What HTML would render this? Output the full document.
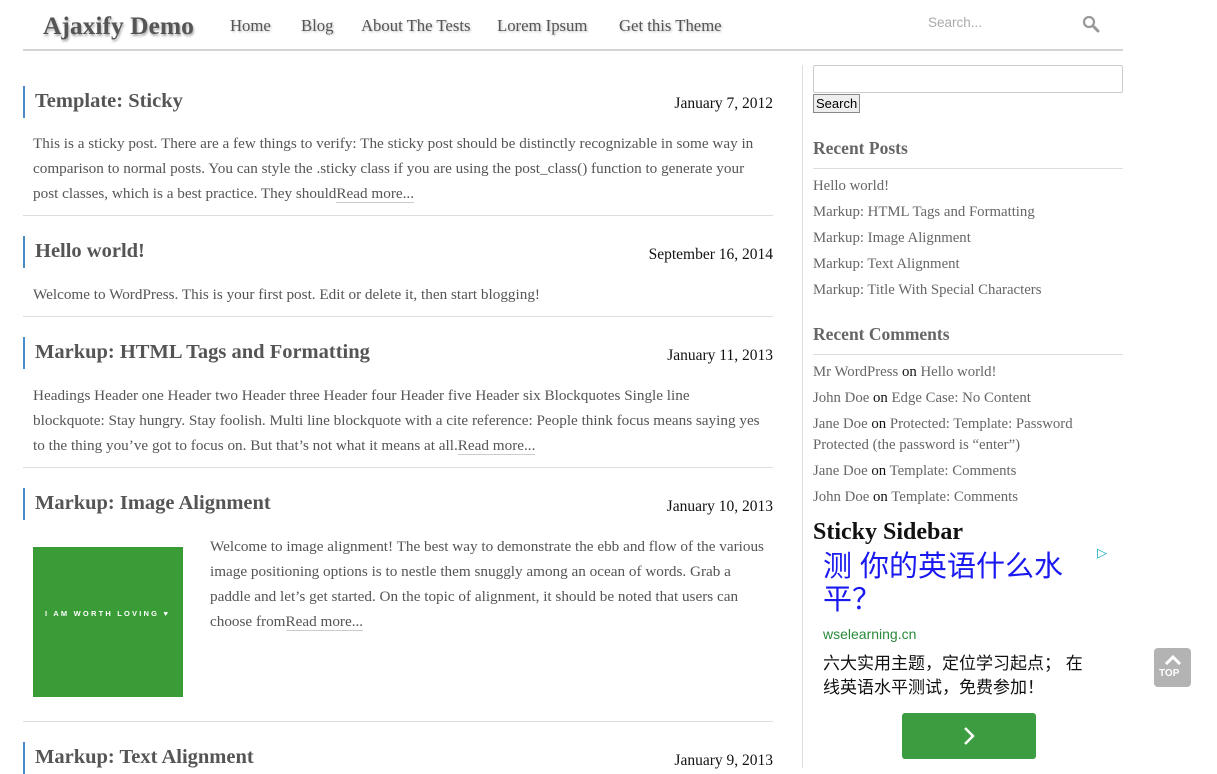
<!DOCTYPE html>
<html><head><meta charset="utf-8"><style>
*{margin:0;padding:0;box-sizing:border-box}
body{width:1217px;height:768px;overflow:hidden;background:#fff;font-family:"Liberation Serif",serif;color:#555;position:relative}
.a{position:absolute;white-space:nowrap}
.logo{left:43px;top:11px;font-size:25.5px;font-weight:bold;color:#555;text-shadow:1px 2px 2px #aaa}
.nav{top:16px;font-size:16.7px;color:#555;text-shadow:1px 1px 2px #bbb}
.hl{position:absolute;left:23px;top:49px;width:1100px;height:2px;background:#d4d4d4}
.t{position:absolute;left:23px;border-left:2px solid #4a8ac8;padding-left:10px;height:32px;line-height:30px;font-size:20.5px;font-weight:bold;color:#555;white-space:nowrap}
.d{position:absolute;right:444px;font-size:15.5px;color:#111;white-space:nowrap}
.p{position:absolute;left:33px;font-size:15.2px;line-height:25px;color:#555;white-space:nowrap}
.rm{border-bottom:1px solid #ccc}
.sep{position:absolute;left:23px;width:750px;height:1px;background:#ddd}
.sb{position:absolute;left:813px;white-space:nowrap}
.wt{font-size:17.5px;font-weight:bold;color:#666}
.sl{font-size:14.8px;line-height:26px;color:#666}
.sl b{font-weight:normal;color:#111}
</style></head><body>
<div class="a logo">Ajaxify Demo</div>
<div class="a nav" style="left:230px">Home</div>
<div class="a nav" style="left:301px">Blog</div>
<div class="a nav" style="left:361px">About The Tests</div>
<div class="a nav" style="left:497px">Lorem Ipsum</div>
<div class="a nav" style="left:619px">Get this Theme</div>
<div class="a" style="left:928px;top:15px;font-family:'Liberation Sans',sans-serif;font-size:13.5px;color:#aaa">Search...</div>
<svg class="a" style="left:1082px;top:15px" width="18" height="18" viewBox="0 0 18 18"><circle cx="7" cy="7" r="5" fill="none" stroke="#999" stroke-width="2.2"/><path d="M11 11 L16 16" stroke="#999" stroke-width="3" stroke-linecap="round"/></svg>
<div class="hl"></div>
<div style="position:absolute;left:802px;top:65px;width:1px;height:703px;background:#ddd"></div>

<div class="t" style="top:86px">Template: Sticky</div>
<div class="d" style="top:95px">January 7, 2012</div>
<div class="p" style="top:131px">This is a sticky post. There are a few things to verify: The sticky post should be distinctly recognizable in some way in<br>comparison to normal posts. You can style the .sticky class if you are using the post_class() function to generate your<br>post classes, which is a best practice. They should<span class="rm">Read more...</span></div>
<div class="sep" style="top:215px"></div>

<div class="t" style="top:236px">Hello world!</div>
<div class="d" style="top:246px">September 16, 2014</div>
<div class="p" style="top:282px">Welcome to WordPress. This is your first post. Edit or delete it, then start blogging!</div>
<div class="sep" style="top:316px"></div>

<div class="t" style="top:337px">Markup: HTML Tags and Formatting</div>
<div class="d" style="top:347px">January 11, 2013</div>
<div class="p" style="top:383px">Headings Header one Header two Header three Header four Header five Header six Blockquotes Single line<br>blockquote: Stay hungry. Stay foolish. Multi line blockquote with a cite reference: People think focus means saying yes<br>to the thing you’ve got to focus on. But that’s not what it means at all.<span class="rm">Read more...</span></div>
<div class="sep" style="top:467px"></div>

<div class="t" style="top:488px">Markup: Image Alignment</div>
<div class="d" style="top:498px">January 10, 2013</div>
<div style="position:absolute;left:33px;top:547px;width:150px;height:150px;background:#3a9c36">
<div class="a" style="left:12px;top:62px;color:#fff;font-family:'Liberation Sans',sans-serif;font-size:7.5px;letter-spacing:2.2px;font-weight:bold">I AM WORTH LOVING ♥</div></div>
<div class="p" style="left:210px;top:534px">Welcome to image alignment! The best way to demonstrate the ebb and flow of the various<br>image positioning options is to nestle them snuggly among an ocean of words. Grab a<br>paddle and let’s get started. On the topic of alignment, it should be noted that users can<br>choose from<span class="rm">Read more...</span></div>
<div class="sep" style="top:721px"></div>

<div class="t" style="top:742px">Markup: Text Alignment</div>
<div class="d" style="top:752px">January 9, 2013</div>

<div class="sb" style="top:65px;width:310px;height:28px;border:1px solid #ccc;border-radius:2px"></div>
<div class="sb" style="top:94px;height:19px;padding:0 2px;border:1px solid #888;background:#eee;font-family:'Liberation Sans',sans-serif;font-size:13px;line-height:17px;color:#000">Search</div>
<div class="sb wt" style="top:138px">Recent Posts</div>
<div class="sb" style="top:168px;width:310px;height:1px;background:#ddd"></div>
<div class="sb sl" style="top:173px">Hello world!<br>Markup: HTML Tags and Formatting<br>Markup: Image Alignment<br>Markup: Text Alignment<br>Markup: Title With Special Characters</div>
<div class="sb wt" style="top:324px">Recent Comments</div>
<div class="sb" style="top:354px;width:310px;height:1px;background:#ddd"></div>
<div class="sb sl" style="top:359px">Mr WordPress <b>on</b> Hello world!<br>John Doe <b>on</b> Edge Case: No Content<br>Jane Doe <b>on</b> Protected: Template: Password<br><span style="position:relative;top:-5px">Protected (the password is “enter”)</span></div>
<div class="sb sl" style="top:458px">Jane Doe <b>on</b> Template: Comments<br>John Doe <b>on</b> Template: Comments</div>
<div class="sb" style="top:519px;font-size:24px;font-weight:bold;color:#111">Sticky Sidebar</div>
<div class="sb" style="left:1097px;top:545px;color:#1ab;font-size:13px">▷</div>
<div class="sb" style="left:823px;top:551px;font-family:'Liberation Sans','Noto Sans CJK SC',sans-serif;font-size:29px;line-height:33px;color:#1a1af0">测 你的英语什么水<br>平？</div>
<div class="sb" style="left:823px;top:626px;font-family:'Liberation Sans',sans-serif;font-size:14px;color:#2a8a3a">wselearning.cn</div>
<div class="sb" style="left:823px;top:652px;font-family:'Liberation Sans','Noto Sans CJK SC',sans-serif;font-size:17px;line-height:24px;color:#111">六大实用主题，定位学习起点； 在<br>线英语水平测试，免费参加！</div>
<div class="sb" style="left:902px;top:713px;width:134px;height:46px;background:#3b9c40;border-radius:3px"><svg style="position:absolute;left:59px;top:13px" width="16" height="20"><path d="M4 2 L12 10 L4 18" fill="none" stroke="#fff" stroke-width="2.5"/></svg></div>
<div class="a" style="left:1154px;top:648px;width:37px;height:39px;background:#b3b3b3;border-radius:4px"><svg style="position:absolute;left:10px;top:7px" width="18" height="10"><path d="M2 9 L9 2 L16 9" fill="none" stroke="#fff" stroke-width="3"/></svg><div class="a" style="left:5px;top:20px;font-family:'Liberation Sans',sans-serif;font-weight:bold;font-size:10px;color:#fff">TOP</div></div>
</body></html>
